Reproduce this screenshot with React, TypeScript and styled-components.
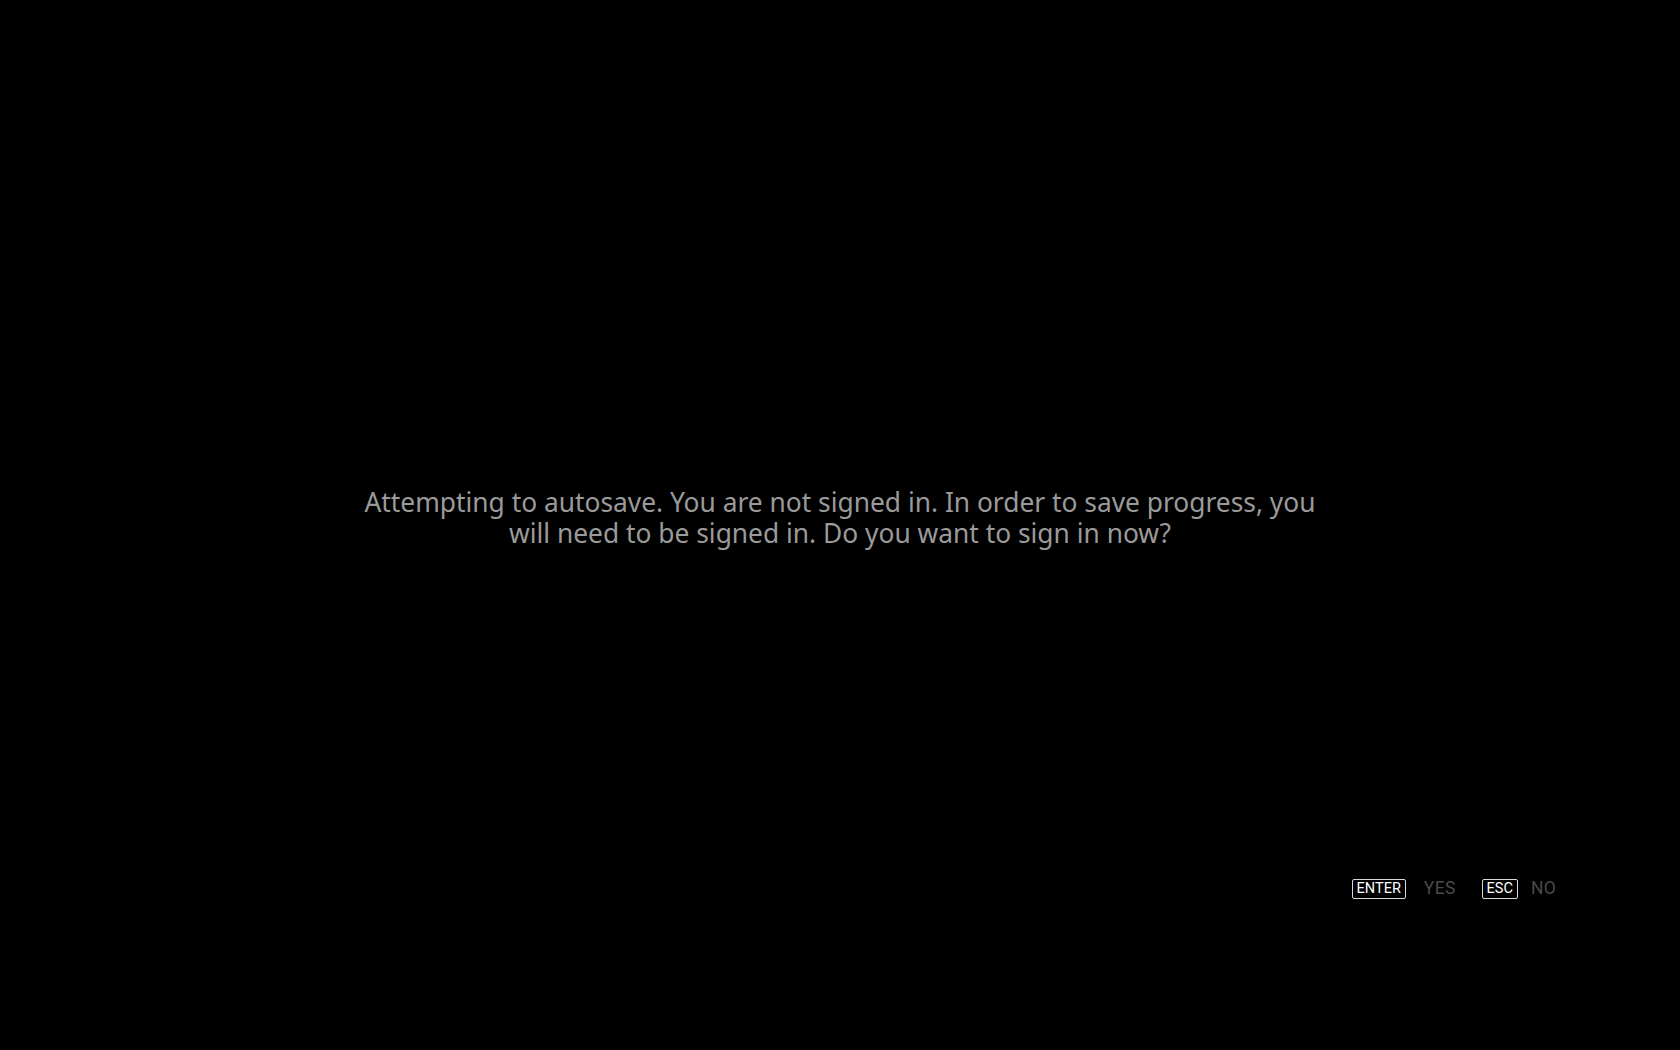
import React from "react";
import styled, { createGlobalStyle } from "styled-components";

const GlobalStyle = createGlobalStyle`
  html, body {
    margin: 0;
    padding: 0;
    background: #000;
  }
  body {
    font-family: "Noto Sans", "Open Sans", sans-serif;
  }
`;

const prompts = [
  { key: "ENTER", label: "YES", gap: 18 },
  { key: "ESC", label: "NO", gap: 13 },
];

const App = () => {
  return (
    <Screen>
      <GlobalStyle />
      <Spacer />
      <Message>
        <Line>Attempting to autosave. You are not signed in. In order to save progress, you</Line>
        <Line>will need to be signed in. Do you want to sign in now?</Line>
      </Message>
      <Footer>
        <PromptBar>
          {prompts.map((p) => (
            <Prompt key={p.key} $gap={p.gap}>
              <KeyCap>{p.key}</KeyCap>
              <PromptLabel>{p.label}</PromptLabel>
            </Prompt>
          ))}
        </PromptBar>
      </Footer>
    </Screen>
  );
};

const Screen = styled.div`
  width: 100%;
  height: 100vh;
  display: grid;
  grid-template-rows: 1fr auto 1fr;
  padding-bottom: 14px;
  box-sizing: border-box;
  background: #000;
  overflow: hidden;
`;

const Spacer = styled.div``;

const Message = styled.div`
  display: flex;
  flex-direction: column;
  align-items: center;
  color: #9a9a9a;
  font-family: "Noto Sans", "Open Sans", sans-serif;
  font-size: 26.35px;
  letter-spacing: 0;
`;

const Line = styled.p`
  margin: 0;
  height: 31px;
  line-height: 31px;
  white-space: nowrap;
`;

const Footer = styled.div`
  display: flex;
  justify-content: flex-end;
  align-items: flex-start;
  padding: 330px 124px 0 0;
`;

const PromptBar = styled.div`
  display: flex;
  align-items: center;
  gap: 26px;
`;

const Prompt = styled.div<{ $gap: number }>`
  display: flex;
  align-items: center;
  gap: ${({ $gap }) => $gap}px;
`;

const KeyCap = styled.span`
  display: inline-flex;
  align-items: center;
  justify-content: center;
  height: 20px;
  padding: 0 4px;
  box-sizing: border-box;
  border: 1px solid #d8d8d8;
  border-radius: 2px;
  color: #fff;
  font-family: "Liberation Sans Narrow", "Roboto", sans-serif;
  font-size: 14.5px;
  line-height: 1;
`;

const PromptLabel = styled.span`
  color: #4a4a4a;
  font-family: "Liberation Sans Narrow", "Roboto", sans-serif;
  font-size: 17.5px;
  line-height: 1;
  letter-spacing: 0.3px;
`;

export default App;
